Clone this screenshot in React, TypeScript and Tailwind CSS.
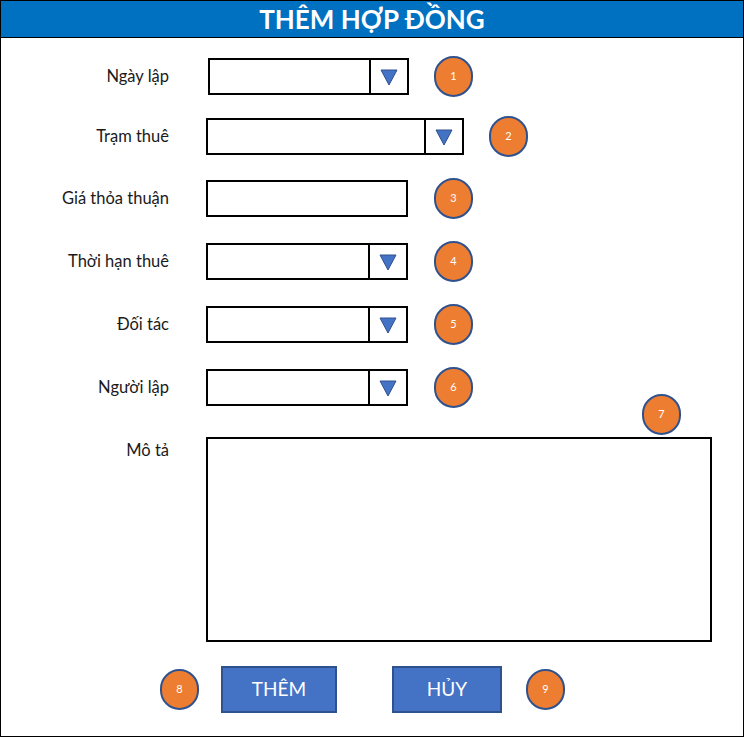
import React from 'react';

const font = { fontFamily: 'Lato, "Open Sans", sans-serif' };

function Badge({ n }: { n: number }) {
  return (
    <div className="w-[39px] h-[41px] shrink-0 rounded-full bg-[#ED7D31] border-2 border-[#2F528F] flex items-center justify-center text-white text-[11px]">
      {n}
    </div>
  );
}

function Arrow() {
  return (
    <svg width="20" height="18" viewBox="0 0 20 18">
      <polygon points="2,2 18,2 10,17" fill="#4472C4" stroke="#2F528F" strokeWidth="1" />
    </svg>
  );
}

function Row({
  label,
  width,
  dropdown,
  n,
  gap,
  mt,
  left,
}: {
  label: string;
  width: number;
  dropdown?: boolean;
  n: number;
  gap: string;
  mt: string;
  left: string;
}) {
  return (
    <div className={`flex items-center h-[37px] ${mt}`}>
      <div className="w-[168px] text-right text-[16.5px] text-[#1a1a1a]">{label}</div>
      <div
        className={`${left} h-[37px] border-2 border-black flex justify-end`}
        style={{ width }}
      >
        {dropdown && (
          <div className="w-[38px] h-full border-l-2 border-black flex items-center justify-center">
            <Arrow />
          </div>
        )}
      </div>
      <div className={gap}>
        <Badge n={n} />
      </div>
    </div>
  );
}

export default function App() {
  return (
    <div className="w-[744px] h-[737px] bg-white border border-black flex flex-col" style={font}>
      <div className="h-[37px] shrink-0 bg-[#0070C0] border-b border-black flex items-center justify-center">
        <h1 className="text-white font-bold text-[26px] leading-none">THÊM HỢP ĐỒNG</h1>
      </div>

      <Row label="Ngày lập" width={201} dropdown n={1} gap="ml-[25px]" mt="mt-[20px]" left="ml-[39px]" />
      <Row label="Trạm thuê" width={258} dropdown n={2} gap="ml-[25px]" mt="mt-[23px]" left="ml-[37px]" />
      <Row label="Giá thỏa thuận" width={202} n={3} gap="ml-[26px]" mt="mt-[25px]" left="ml-[37px]" />
      <Row label="Thời hạn thuê" width={202} dropdown n={4} gap="ml-[26px]" mt="mt-[26px]" left="ml-[37px]" />
      <Row label="Đối tác" width={202} dropdown n={5} gap="ml-[26px]" mt="mt-[26px]" left="ml-[37px]" />
      <Row label="Người lập" width={202} dropdown n={6} gap="ml-[26px]" mt="mt-[26px]" left="ml-[37px]" />

      <div className="flex mt-[31px]">
        <div className="w-[168px] text-right text-[16.5px] text-[#1a1a1a] pt-[1px]">Mô tả</div>
        <div className="relative ml-[37px] w-[506px] h-[205px] border-2 border-black">
          <div className="absolute -top-[45px] right-[29px]">
            <Badge n={7} />
          </div>
        </div>
      </div>

      <div className="flex items-center mt-[24px]">
        <div className="ml-[159px]">
          <Badge n={8} />
        </div>
        <button className="ml-[22px] w-[116px] h-[47px] bg-[#4472C4] border-2 border-[#2F528F] text-white text-[19px]">
          THÊM
        </button>
        <button className="ml-[55px] w-[110px] h-[47px] bg-[#4472C4] border-2 border-[#2F528F] text-white text-[19px]">
          HỦY
        </button>
        <div className="ml-[24px]">
          <Badge n={9} />
        </div>
      </div>
    </div>
  );
}
